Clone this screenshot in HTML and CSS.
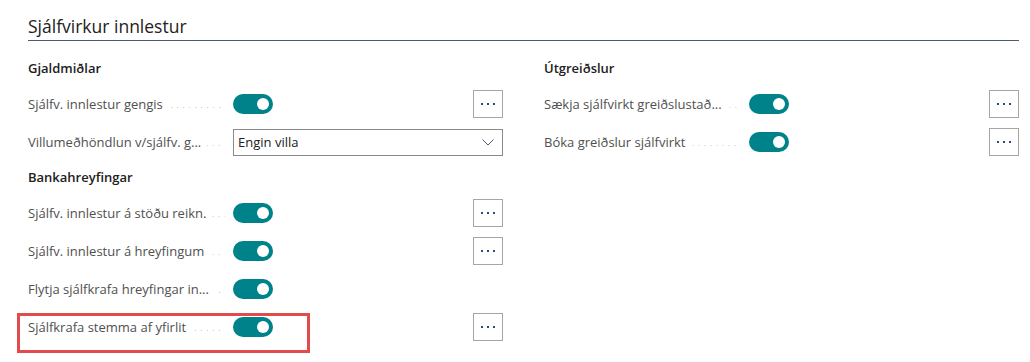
FILE: index.html
```html
<!DOCTYPE html>
<html lang="is">
<head>
<meta charset="utf-8">
<title>Sjálfvirkur innlestur</title>
<link rel="stylesheet" href="styles.css">
</head>
<body>
<div class="page">
  <div class="group-title">Sjálfvirkur innlestur</div>
  <div class="columns">
    <div class="col">
      <div class="section-head">Gjaldmiðlar</div>
      <div class="field">
        <div class="label-wrap"><span class="label">Sjálfv. innlestur gengis</span><span class="leader"></span></div>
        <div class="control"><span class="toggle"></span><button class="more"><i></i><i></i><i></i></button></div>
      </div>
      <div class="field">
        <div class="label-wrap"><span class="label">Villumeðhöndlun v/sjálfv. g...</span><span class="leader"></span></div>
        <div class="control">
          <div class="select"><span>Engin villa</span><svg width="12" height="7" viewBox="0 0 12 7"><polyline points="0.5,0.5 6,6 11.5,0.5" fill="none" stroke="#505c6d" stroke-width="1"/></svg></div>
        </div>
      </div>
      <div class="section-head">Bankahreyfingar</div>
      <div class="field">
        <div class="label-wrap"><span class="label">Sjálfv. innlestur á stöðu reikn.</span><span class="leader"></span></div>
        <div class="control"><span class="toggle"></span><button class="more"><i></i><i></i><i></i></button></div>
      </div>
      <div class="field">
        <div class="label-wrap"><span class="label">Sjálfv. innlestur á hreyfingum</span><span class="leader"></span></div>
        <div class="control"><span class="toggle"></span><button class="more"><i></i><i></i><i></i></button></div>
      </div>
      <div class="field">
        <div class="label-wrap"><span class="label">Flytja sjálfkrafa hreyfingar in...</span><span class="leader"></span></div>
        <div class="control"><span class="toggle"></span></div>
      </div>
      <div class="field highlighted">
        <div class="label-wrap"><span class="label">Sjálfkrafa stemma af yfirlit</span><span class="leader"></span></div>
        <div class="control"><span class="toggle"></span><button class="more"><i></i><i></i><i></i></button></div>
      </div>
    </div>
    <div class="col">
      <div class="section-head">Útgreiðslur</div>
      <div class="field">
        <div class="label-wrap"><span class="label">Sækja sjálfvirkt greiðslustað...</span><span class="leader"></span></div>
        <div class="control"><span class="toggle"></span><button class="more"><i></i><i></i><i></i></button></div>
      </div>
      <div class="field">
        <div class="label-wrap"><span class="label">Bóka greiðslur sjálfvirkt</span><span class="leader"></span></div>
        <div class="control"><span class="toggle"></span><button class="more"><i></i><i></i><i></i></button></div>
      </div>
    </div>
  </div>
</div>
</body>
</html>
```
FILE: styles.css
```css
* { box-sizing: border-box; }
html, body { margin: 0; padding: 0; background: #fff; }
body {
  font-family: "Open Sans", "Noto Sans", "Liberation Sans", sans-serif;
  color: #212121;
}
.page {
  width: 1030px;
  min-height: 362px;
  padding: 14px 11px 0 28px;
}
.group-title {
  font-size: 17.5px;
  font-weight: 500;
  line-height: 24px;
  padding-bottom: 2px;
  border-bottom: 1px solid #4b5a6c;
  color: #212121;
}
.columns {
  display: grid;
  grid-template-columns: 475px 475px;
  column-gap: 41px;
  padding-top: 11px;
}
.col { display: flex; flex-direction: column; }
.section-head {
  font-size: 13px;
  font-weight: 600;
  line-height: 20px;
  height: 33px;
  padding-top: 6px;
  color: #212121;
}
.field {
  display: flex;
  align-items: center;
  height: 38px;
  position: relative;
}
.label-wrap {
  width: 197px;
  display: flex;
  align-items: center;
  margin-right: 8px;
}
.label {
  font-size: 13px;
  line-height: 20px;
  color: #505050;
  white-space: nowrap;
}
.leader {
  flex: 1;
  height: 1px;
  margin-left: 6px;
  margin-top: 6px;
  background-image: linear-gradient(to right, #c8c8c8 1px, transparent 1px);
  background-size: 6px 1px;
  background-position: right top;
  background-repeat: repeat-x;
}
.control {
  flex: 1;
  display: flex;
  align-items: center;
}
.toggle {
  width: 40px;
  height: 20px;
  border-radius: 10px;
  background: #00828a;
  position: relative;
  display: block;
}
.toggle::after {
  content: "";
  position: absolute;
  right: 4px;
  top: 4px;
  width: 12px;
  height: 12px;
  border-radius: 50%;
  background: #fff;
}
.more {
  margin-left: auto;
  width: 30px;
  height: 28px;
  border: 1px solid #a6a6a6;
  background: #fff;
  padding: 0;
  display: flex;
  align-items: center;
  justify-content: center;
  gap: 4px;
}
.more i {
  display: block;
  width: 2px;
  height: 2px;
  background: #2b4a73;
}
.select {
  width: 270px;
  height: 27px;
  border: 1px solid #8a8a8a;
  display: flex;
  align-items: center;
  justify-content: space-between;
  padding: 0 8px 0 4px;
  font-size: 13px;
  color: #212121;
}
.select svg { display: block; }
.highlighted::after {
  content: "";
  position: absolute;
  left: -11px;
  top: 5px;
  width: 287px;
  height: 34px;
  border: 3px solid #e24b4b;
}
```
